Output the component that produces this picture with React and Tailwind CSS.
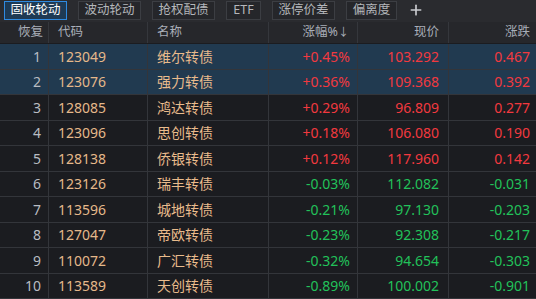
import { Plus } from 'lucide-react';

const TABS = [
  ['固收轮动', 'w-[63px]'],
  ['波动轮动', 'w-[63px]'],
  ['抢权配债', 'w-[63px]'],
  ['ETF', 'w-[35px]'],
  ['涨停价差', 'w-[63px]'],
  ['偏离度', 'w-[51px]'],
];

const ROWS = [
  ['123049', '维尔转债', '+0.45%', '103.292', '0.467'],
  ['123076', '强力转债', '+0.36%', '109.368', '0.392'],
  ['128085', '鸿达转债', '+0.29%', '96.809', '0.277'],
  ['123096', '思创转债', '+0.18%', '106.080', '0.190'],
  ['128138', '侨银转债', '+0.12%', '117.960', '0.142'],
  ['123126', '瑞丰转债', '-0.03%', '112.082', '-0.031'],
  ['113596', '城地转债', '-0.21%', '97.130', '-0.203'],
  ['127047', '帝欧转债', '-0.23%', '92.308', '-0.217'],
  ['110072', '广汇转债', '-0.32%', '94.654', '-0.303'],
  ['113589', '天创转债', '-0.89%', '100.002', '-0.901'],
];

const font = { fontFamily: '"Noto Sans", "Noto Sans CJK SC", sans-serif' };

export default function App() {
  return (
    <div className="w-[536px] h-[299px] overflow-hidden bg-[#1b1c20] flex flex-col" style={font}>
      {/* Tabs */}
      <div className="h-[22px] bg-[#2a2b2f] flex items-start pt-[1px] pl-[4px] gap-[11px] shrink-0">
        {TABS.map(([t, w], i) => (
          <div
            key={t}
            className={
              i === 0
                ? `${w} h-[19px] flex items-center justify-center text-[12.5px] leading-none border border-[#2f8ae0] bg-[#1e3a54] text-white`
                : `${w} h-[19px] flex items-center justify-center text-[12.5px] leading-none border border-[#3c3e43] bg-[#25262a] text-[#b4b6ba]`
            }
          >
            {t}
          </div>
        ))}
        <Plus className="w-[16px] h-[16px] text-[#c9cbcf] mt-[1px]" strokeWidth={2.5} />
      </div>

      {/* Header */}
      <div className="h-[22px] bg-[#26272b] flex text-[12.5px] text-[#a9aeb8] shrink-0 border-b border-[#1b1c20]">
        <div className="w-[49px] flex items-center justify-end pr-[5px] border-r border-[#35373c]">恢复</div>
        <div className="w-[99px] flex items-center pl-[9px] border-r border-[#35373c]">代码</div>
        <div className="w-[121px] flex items-center pl-[9px] border-r border-[#35373c]">名称</div>
        <div className="w-[89px] flex items-center justify-end pr-[8px] border-r border-[#35373c]">
          涨幅%<span className="text-[11px]">↓</span>
        </div>
        <div className="w-[91px] flex items-center justify-end pr-[9px] border-r border-[#35373c]">现价</div>
        <div className="flex-1 flex items-center justify-end pr-[6px]">涨跌</div>
      </div>

      {/* Body */}
      <div className="flex-1 flex flex-col">
        {ROWS.map((r, i) => {
          const up = r[2].startsWith('+');
          const color = up ? 'text-[#f2393f]' : 'text-[#22c15a]';
          return (
            <div
              key={r[0]}
              className={`flex-1 flex text-[14px] border-b border-[#33353a] ${i < 2 ? 'bg-[#213a50]' : ''}`}
            >
              <div className="w-[49px] flex items-center justify-end pr-[7px] text-[#b9bcc2] border-r border-[#33353a]">{i + 1}</div>
              <div className="w-[99px] flex items-center pl-[9px] text-[#e5b88a] border-r border-[#33353a]">{r[0]}</div>
              <div className="w-[121px] flex items-center pl-[9px] text-[#e9bb8c] border-r border-[#33353a]">{r[1]}</div>
              <div className={`w-[89px] flex items-center justify-end pr-[7px] border-r border-[#33353a] ${color}`}>{r[2]}</div>
              <div className={`w-[91px] flex items-center justify-end pr-[9px] border-r border-[#33353a] ${color}`}>{r[3]}</div>
              <div className={`flex-1 flex items-center justify-end pr-[6px] ${color}`}>{r[4]}</div>
            </div>
          );
        })}
      </div>
    </div>
  );
}
